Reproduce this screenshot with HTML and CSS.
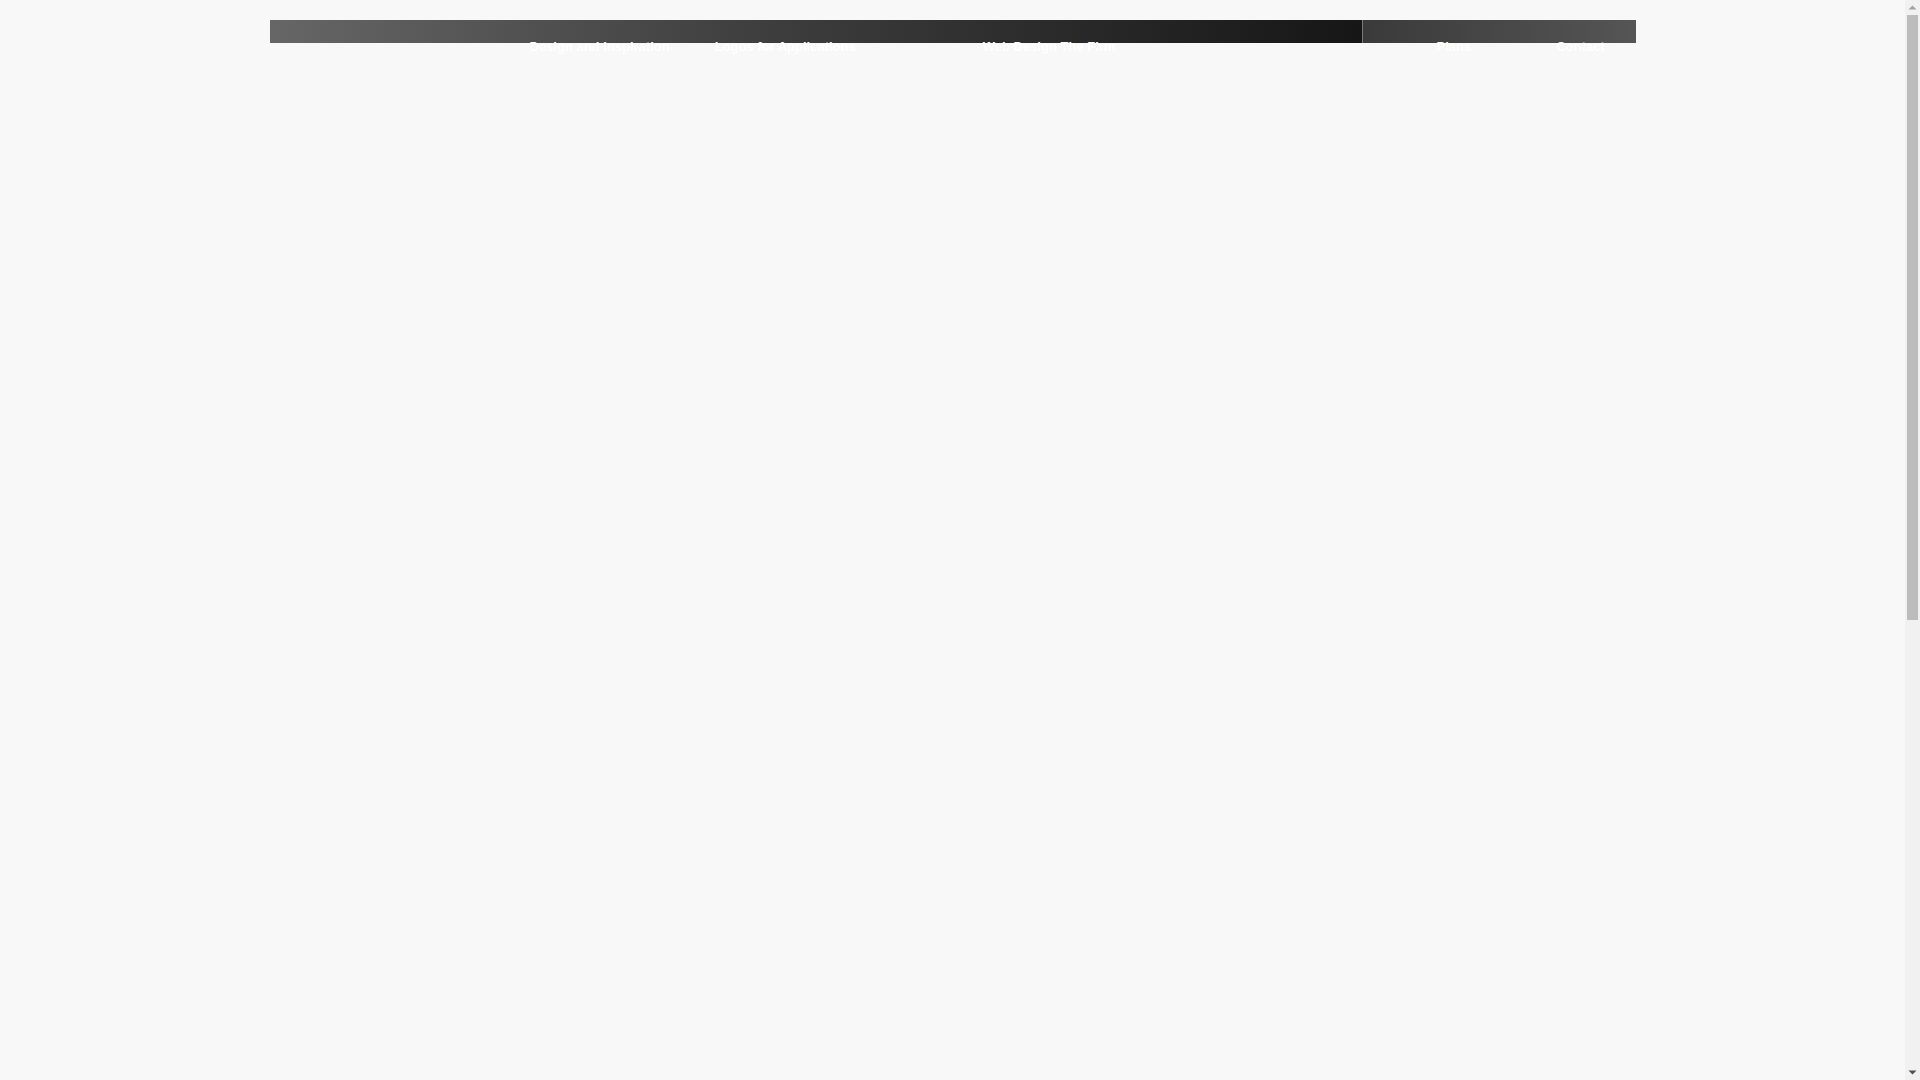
FILE: index.html
```html
<!DOCTYPE html>
<html lang="en">
<head>
<meta charset="utf-8">
<title>Menu</title>
<link rel="stylesheet" href="styles.css">
</head>
<body>
<div class="page">
  <nav class="menu">
    <div class="bar bar-main">
      <a class="item item-1" href="#">Design and Inspiration</a>
      <a class="item item-2" href="#">Logos for Applications</a>
      <a class="item item-3" href="#">Web Design The Firm</a>
    </div>
    <div class="bar bar-side">
      <a class="item item-4" href="#">Plans</a>
      <a class="item item-5" href="#">Contact</a>
    </div>
  </nav>
</div>
<div class="scrollbar" aria-hidden="true">
  <div class="sb-btn">
    <svg width="15" height="15" viewBox="0 0 15 15"><polygon points="3.5,9.5 7.5,5.5 11.5,9.5" fill="#a3a3a3"/></svg>
  </div>
  <div class="sb-track">
    <div class="sb-thumb"></div>
  </div>
  <div class="sb-btn">
    <svg width="15" height="15" viewBox="0 0 15 15"><polygon points="3.5,5.5 11.5,5.5 7.5,9.5" fill="#505050"/></svg>
  </div>
</div>
</body>
</html>
```

FILE: styles.css
```css
html, body {
  margin: 0;
  padding: 0;
  background: #f8f8f8;
  overflow: hidden;
}

body {
  font-family: "Liberation Sans", Arial, sans-serif;
  margin-right: 15px;
  height: 1080px;
}

.page {
  width: 1366px;
  margin: 0 auto;
  padding-top: 20px;
}

.menu {
  display: flex;
  height: 23px;
}

.bar {
  height: 23px;
  display: flex;
  align-items: flex-start;
}

.bar-main {
  width: 1092px;
  background: linear-gradient(to right, #666666 0%, #3e3e3e 45%, #161616 100%);
  border-right: 1px solid #7a7a7a;
}

.bar-side {
  width: 273px;
  background: linear-gradient(to right, #3a3a3a 0%, #555555 100%);
}

.item {
  display: block;
  color: #ffffff;
  text-decoration: none;
  font-size: 13px;
  font-weight: bold;
  line-height: 16px;
  padding-top: 19px;
  white-space: nowrap;
}

.item-1 { margin-left: 260px; }
.item-2 { margin-left: 45px; }
.item-3 { margin-left: 127px; }
.item-4 { margin-left: 74px; }
.item-5 { margin-left: 85px; }

.scrollbar {
  position: fixed;
  top: 0;
  right: 0;
  bottom: 0;
  width: 15px;
  background: #f1f1f1;
  display: flex;
  flex-direction: column;
}

.sb-btn {
  height: 15px;
  flex: none;
}

.sb-btn svg {
  display: block;
}

.sb-track {
  flex: 1;
  padding: 0 2px;
}

.sb-thumb {
  height: 605px;
  background: #bcbcbc;
}
```
